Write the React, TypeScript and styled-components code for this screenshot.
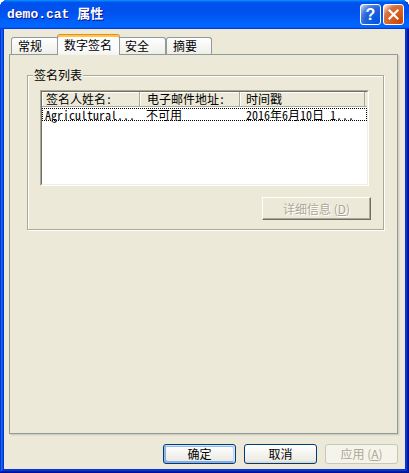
import React from "react";
import styled, { createGlobalStyle, css } from "styled-components";

const GlobalStyle = createGlobalStyle`
  html, body { margin: 0; padding: 0; background: #ffffff; }
  body { font-family: "Noto Sans CJK SC", sans-serif; font-size: 12px; }
  #root { width: 409px; height: 473px; }
`;

const CJK = `"Noto Sans CJK SC", "Noto Sans", sans-serif`;

const Window = styled.div`
  box-sizing: border-box;
  width: 409px;
  height: 473px;
  display: flex;
  flex-direction: column;
  padding: 0 4px 4px;
  background: #0831d9;
  border-radius: 8px 8px 0 0;
  box-shadow: inset -1px -1px #00138c, inset 1px 1px #0831d9,
    inset -2px -2px #001ea0, inset 2px 2px #166aee,
    inset -3px -3px #003bda, inset 3px 3px #0855dd;
`;

const TitleBar = styled.div`
  flex: none;
  box-sizing: border-box;
  height: 29px;
  margin: 0 -4px;
  padding: 0 5px 0 7px;
  display: flex;
  align-items: center;
  gap: 2px;
  border-radius: 8px 8px 0 0;
  background: linear-gradient(
    180deg,
    #0997ff,
    #0053ee 8%,
    #0050ee 40%,
    #0066ff 88%,
    #0066ff 93%,
    #005bff 95%,
    #003dd7 96%,
    #003dd7
  );
`;

const TitleText = styled.div`
  flex: 1;
  color: #ffffff;
  font: bold 13px/16px "Liberation Mono", "Noto Sans CJK SC", monospace;
  text-shadow: 1px 1px #0f1089;
  white-space: pre;
  margin-top: 1px;
`;

const CaptionButton = styled.div<{ $variant: "help" | "close" }>`
  box-sizing: border-box;
  width: 21px;
  height: 21px;
  border: 1px solid #ffffff;
  border-radius: 3px;
  display: flex;
  align-items: center;
  justify-content: center;
  color: #ffffff;
  font: bold 16px/16px "Liberation Sans", sans-serif;
  background: ${(p) =>
    p.$variant === "close"
      ? "radial-gradient(circle at 90% 90%, #cc4600 0%, #dc6527 55%, #cd7546 70%, #ffccb2 90%, #ffffff 100%)"
      : "radial-gradient(circle at 90% 90%, #0054e9 0%, #2263d5 55%, #4479e4 70%, #a3bbec 90%, #ffffff 100%)"};
`;

const Body = styled.div`
  flex: 1;
  min-height: 0;
  display: flex;
  flex-direction: column;
  background: #ece9d8;
  padding: 5px 7px 0 5px;
`;

const TabStrip = styled.div`
  flex: none;
  height: 21px;
  margin-bottom: -1px;
  padding-left: 2px;
  display: flex;
  align-items: flex-end;
  position: relative;
  z-index: 1;
`;

const Tab = styled.div<{ $active?: boolean; $w: number }>`
  box-sizing: border-box;
  width: ${(p) => p.$w}px;
  height: 17px;
  margin-bottom: 1px;
  padding: 1px 0 0 6px;
  border: 1px solid #919b9c;
  border-bottom: none;
  border-radius: 3px 3px 0 0;
  font: 12px/14px ${CJK};
  color: #000000;
  white-space: nowrap;
  background: linear-gradient(180deg, #ffffff, #fafaf9 26%, #f0f0ea 95%, #ecebe5);
  ${(p) =>
    p.$active &&
    css`
      position: relative;
      z-index: 2;
      height: 21px;
      margin: 0 -2px;
      padding-top: 3px;
      border-top-color: #e68b2c;
      box-shadow: inset 0 2px #ffc83c;
      background: linear-gradient(180deg, #fcfcfe, #fcfcfe 70%, #f4f3ee);
    `}
`;

const Panel = styled.div`
  flex: 1;
  min-height: 0;
  display: flex;
  flex-direction: column;
  align-items: stretch;
  padding: 13px 13px 0 17px;
  border: 1px solid #919b9c;
  background: #ece9d8;
  box-shadow: 1px 1px 0 #d0cebf, 2px 2px 0 #e3e0d0;
`;

const GroupBox = styled.fieldset`
  margin: 0;
  min-width: 0;
  padding: 8px 14px 9px 12px;
  border: 1px solid #aca899;
  box-shadow: inset 1px 1px #ffffff, 1px 1px #ffffff;
  display: flex;
  flex-direction: column;
`;

const GroupLabel = styled.legend`
  margin-left: -7px;
  padding: 0 1px;
  font: 12px/14px ${CJK};
  color: #000000;
  background: #ece9d8;
`;

const ListFrame = styled.div`
  box-sizing: border-box;
  height: 96px;
  border: 1px solid;
  border-color: #aca899 #ffffff #ffffff #aca899;
`;

const ListInner = styled.div`
  box-sizing: border-box;
  height: 100%;
  border: 1px solid;
  border-color: #716f64 #f1efe2 #f1efe2 #716f64;
  background: #ffffff;
  overflow: hidden;
`;

const HeaderRow = styled.div`
  display: flex;
  height: 15px;
  background: #ece9d8;
`;

const HeaderCell = styled.div<{ $w?: number; $pad: number }>`
  box-sizing: border-box;
  ${(p) => (p.$w ? `width: ${p.$w}px; flex: none;` : "flex: 1;")}
  height: 15px;
  padding-left: ${(p) => p.$pad}px;
  border-right: 1px solid #aca899;
  border-bottom: 1px solid #aca899;
  box-shadow: inset 1px 1px #ffffff;
  font: 12px/14px ${CJK};
  font-feature-settings: "hwid" 1;
  color: #000000;
  white-space: nowrap;
`;

const HeaderFiller = styled.div`
  width: 2px;
  flex: none;
  border-bottom: 1px solid #aca899;
`;

const ListRow = styled.div`
  box-sizing: border-box;
  display: flex;
  align-items: center;
  height: 13px;
  margin-top: 1px;
  border: 1px dotted #000000;
`;

const Cell = styled.div<{ $w?: number; $pad: number }>`
  box-sizing: border-box;
  ${(p) => (p.$w ? `width: ${p.$w}px; flex: none;` : "flex: 1;")}
  padding-left: ${(p) => p.$pad}px;
  font: 12px/11px ${CJK};
  font-feature-settings: "hwid" 1;
  color: #000000;
  white-space: nowrap;
`;

const DetailButton = styled.div`
  align-self: flex-end;
  box-sizing: border-box;
  width: 109px;
  height: 23px;
  margin: 11px -2px 0 0;
  border: 1px solid;
  border-color: #ffffff #716f64 #716f64 #ffffff;
  box-shadow: inset -1px -1px #aca899;
  background: #ece9d8;
  display: flex;
  align-items: center;
  justify-content: center;
  font: 12px/14px ${CJK};
  color: #aca899;
  text-shadow: 1px 1px #ffffff;
  white-space: pre;
`;

const Footer = styled.div`
  flex: none;
  height: 35px;
  box-sizing: border-box;
  padding-top: 10px;
  display: flex;
  justify-content: flex-end;
  gap: 8px;
`;

const PushButton = styled.div<{ $kind?: "default" | "disabled" }>`
  box-sizing: border-box;
  width: 73px;
  height: 20px;
  border: 1px solid #003c74;
  border-radius: 3px;
  background: linear-gradient(180deg, #ffffff, #ecebe5 86%, #d8d0c4);
  display: flex;
  align-items: center;
  justify-content: center;
  font: 12px/14px ${CJK};
  color: #000000;
  white-space: pre;
  ${(p) =>
    p.$kind === "default" &&
    css`
      box-shadow: inset -1px 1px #cee7ff, inset 1px 2px #98b8ea,
        inset -2px 2px #bcd4f6, inset 1px -1px #89ade4,
        inset 2px -2px #89ade4;
    `}
  ${(p) =>
    p.$kind === "disabled" &&
    css`
      border-color: #c9c7ba;
      background: #f5f4ea;
      color: #aca899;
    `}
`;

const CloseGlyph = () => (
  <svg width="13" height="13" viewBox="0 0 13 13">
    <path d="M2.5 2.5 L10.5 10.5 M10.5 2.5 L2.5 10.5" stroke="#ffffff" strokeWidth="2.2" strokeLinecap="square" />
  </svg>
);

export default function App() {
  return (
    <>
      <GlobalStyle />
      <Window>
        <TitleBar>
          <TitleText>demo.cat 属性</TitleText>
          <CaptionButton $variant="help">?</CaptionButton>
          <CaptionButton $variant="close">
            <CloseGlyph />
          </CaptionButton>
        </TitleBar>
        <Body>
          <TabStrip>
            <Tab $w={48}>常规</Tab>
            <Tab $w={63} $active>
              数字签名
            </Tab>
            <Tab $w={48}>安全</Tab>
            <Tab $w={46}>摘要</Tab>
          </TabStrip>
          <Panel>
            <GroupBox>
              <GroupLabel>签名列表</GroupLabel>
              <ListFrame>
                <ListInner>
                  <HeaderRow>
                    <HeaderCell $w={98} $pad={4}>
                      签名人姓名:
                    </HeaderCell>
                    <HeaderCell $w={100} $pad={7}>
                      电子邮件地址:
                    </HeaderCell>
                    <HeaderCell $pad={6}>时间戳</HeaderCell>
                    <HeaderFiller />
                  </HeaderRow>
                  <ListRow>
                    <Cell $w={97} $pad={2}>
                      Agricultural...
                    </Cell>
                    <Cell $w={100} $pad={6}>
                      不可用
                    </Cell>
                    <Cell $pad={6}>2016年6月10日 1...</Cell>
                  </ListRow>
                </ListInner>
              </ListFrame>
              <DetailButton>
                详细信息 (<u>D</u>)
              </DetailButton>
            </GroupBox>
          </Panel>
          <Footer>
            <PushButton $kind="default">确定</PushButton>
            <PushButton>取消</PushButton>
            <PushButton $kind="disabled">
              应用 (<u>A</u>)
            </PushButton>
          </Footer>
        </Body>
      </Window>
    </>
  );
}
